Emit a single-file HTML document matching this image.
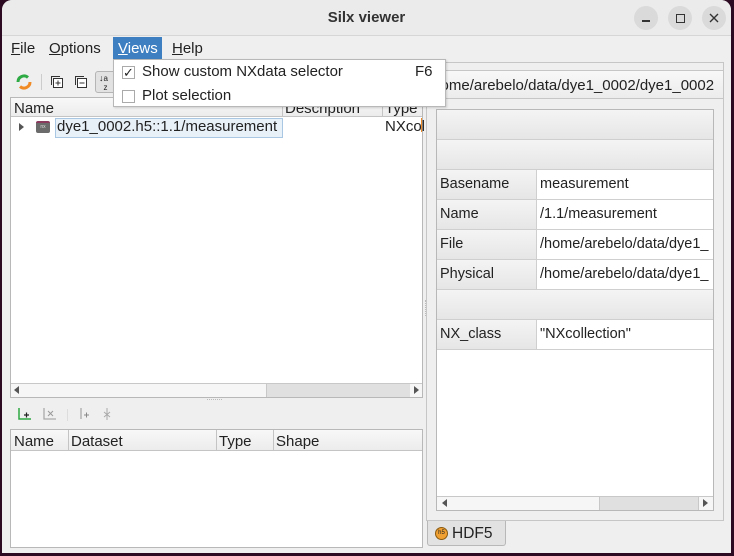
<!DOCTYPE html>
<html><head><meta charset="utf-8"><style>
*{box-sizing:border-box;margin:0;padding:0}
body{width:734px;height:556px;overflow:hidden;background:#2c0a22;font-family:"Liberation Sans",sans-serif;font-size:14px;color:#222;position:relative}
.a{position:absolute}
#win{left:2px;top:0;width:729px;height:553px;background:#efefef;border-radius:10px 10px 0 0;overflow:hidden}
.tb{left:0;top:0;width:729px;height:36px;background:#ebebeb;border-bottom:1px solid #d6d6d6}
.wb{width:24px;height:24px;border-radius:12px;background:#dadada;top:6px}
.white{background:#fff;border:1px solid #b8b8b8}
.hdr{background:linear-gradient(#f8f8f8,#ececec);border-bottom:1px solid #c4c4c4}
.cell{position:absolute;border-right:1px solid #cfcfcf;border-bottom:1px solid #cfcfcf;padding-left:3px;line-height:29px;font-size:14.5px}
.gray{background:linear-gradient(#f4f4f4,#e6e6e6)}
</style></head><body>
<div id="win" class="a">
 <div class="a tb"><div class="a" style="left:0;width:729px;top:9px;text-align:center;font-weight:bold;font-size:15px;color:#333">Silx viewer</div>
  <div class="a wb" style="left:632px"><div class="a" style="left:8px;top:14px;width:8px;height:1.5px;background:#333"></div></div>
  <div class="a wb" style="left:666px"><div class="a" style="left:8px;top:8px;width:9px;height:9px;border:1.3px solid #333"></div></div>
  <div class="a wb" style="left:700px"><svg class="a" style="left:7px;top:7px" width="10" height="10"><path d="M1 1L9 9M9 1L1 9" stroke="#333" stroke-width="1.4"/></svg></div>
 </div>
 <div class="a" style="left:9px;top:40px;font-size:15px"><u>F</u>ile</div>
 <div class="a" style="left:47px;top:40px;font-size:15px"><u>O</u>ptions</div>
 <div class="a" style="left:111px;top:37px;width:49px;height:22px;background:#3d7fc1"></div>
 <div class="a" style="left:116px;top:40px;font-size:15px;color:#fff"><u>V</u>iews</div>
 <div class="a" style="left:170px;top:40px;font-size:15px"><u>H</u>elp</div>
 <!-- toolbar -->
 <svg class="a" style="left:13px;top:73px" width="18" height="18"><path d="M3 9a6 6 0 0 1 10-4.5" stroke="#2eaa44" stroke-width="3" fill="none"/><path d="M15 9a6 6 0 0 1-10 4.5" stroke="#f08a24" stroke-width="3" fill="none"/></svg>
 <div class="a" style="left:39px;top:74px;width:1px;height:16px;background:#ccc"></div>
 <svg class="a" style="left:48px;top:75px" width="14" height="14"><rect x="3.5" y="3.5" width="9" height="9" fill="#fff" stroke="#333"/><path d="M1.5 10V1.5H10" stroke="#333" fill="none"/><path d="M8 5.5v5M5.5 8h5" stroke="#333"/></svg>
 <svg class="a" style="left:72px;top:75px" width="14" height="14"><rect x="3.5" y="3.5" width="9" height="9" fill="#fff" stroke="#333"/><path d="M1.5 10V1.5H10" stroke="#333" fill="none"/><path d="M5.5 8h5" stroke="#333"/></svg>
 <div class="a" style="left:93px;top:71px;width:22px;height:22px;border:1px solid #b5b5b5;border-radius:3px;background:#e2e2e2;font-size:9px;line-height:8px;padding:2px 0 0 3px">↓<span style="font-size:8px">a<br>&nbsp;&nbsp;z</span></div>
 <!-- tree -->
 <div class="a white" style="left:8px;top:97px;width:413px;height:301px">
  <div class="a hdr" style="left:0;top:0;width:411px;height:19px"></div>
  <div class="a" style="left:3px;top:2px;font-size:15px">Name</div>
  <div class="a" style="left:271px;top:0;width:1px;height:19px;background:#c4c4c4"></div>
  <div class="a" style="left:274px;top:2px;font-size:15px">Description</div>
  <div class="a" style="left:371px;top:0;width:1px;height:19px;background:#c4c4c4"></div>
  <div class="a" style="left:374px;top:2px;font-size:15px">Type</div>
  <svg class="a" style="left:8px;top:25px" width="6" height="8"><path d="M0 0L5 4L0 8Z" fill="#555"/></svg>
  <div class="a" style="left:25px;top:23px;width:14px;height:12px;background:#6b6b6b;border-top:2px solid #8a3b5d;border-radius:2px;font-size:5px;color:#ddd;text-align:center;line-height:9px">nx</div>
  <div class="a" style="left:44px;top:20px;width:228px;height:20px;background:#e8f0f8;border:1px solid #a9c6e3"></div>
  <div class="a" style="left:46px;top:20px;font-size:15px">dye1_0002.h5::1.1/measurement</div>
  <div class="a" style="left:374px;top:20px;font-size:15px">NXcol</div>
  <div class="a" style="left:410px;top:20px;width:1px;height:14px;background:#f08a24"></div>
  <div class="a" style="left:0;top:285px;width:411px;height:14px;background:#f6f6f6;border-top:1px solid #c8c8c8"></div>
  <div class="a" style="left:255px;top:286px;width:144px;height:13px;background:#e0e0e0;border-left:1px solid #c8c8c8"></div>
  <svg class="a" style="left:3px;top:288px" width="6" height="8"><path d="M5 0L0 4L5 8Z" fill="#555"/></svg>
  <svg class="a" style="left:403px;top:288px" width="6" height="8"><path d="M0 0L5 4L0 8Z" fill="#555"/></svg>
 </div>
 <!-- bottom toolbar -->
 <svg class="a" style="left:16px;top:408px" width="14" height="12"><path d="M1 0V11H13" stroke="#2eaa44" stroke-width="1.5" fill="none"/><path d="M6 7h5M8.5 4.5v5" stroke="#222" stroke-width="1.2"/></svg>
 <svg class="a" style="left:41px;top:408px" width="14" height="12"><path d="M1 0V11H13" stroke="#aaa" stroke-width="1.3" fill="none"/><path d="M5 3l5 5M10 3l-5 5" stroke="#999"/></svg>
 <div class="a" style="left:65px;top:409px;width:1px;height:12px;background:#ddd"></div>
 <svg class="a" style="left:78px;top:408px" width="12" height="12"><path d="M1 0V11" stroke="#aaa" stroke-width="1.3"/><path d="M4 7h5M6.5 4.5v5" stroke="#888"/></svg>
 <svg class="a" style="left:100px;top:408px" width="10" height="12"><path d="M5 0V12M2 4l6 5M8 4l-6 5" stroke="#aaa"/></svg>
 <!-- second table -->
 <div class="a white" style="left:8px;top:429px;width:413px;height:119px">
  <div class="a hdr" style="left:0;top:0;width:411px;height:21px"></div>
  <div class="a" style="left:3px;top:3px;font-size:15px">Name</div>
  <div class="a" style="left:57px;top:0;width:1px;height:21px;background:#c4c4c4"></div>
  <div class="a" style="left:60px;top:3px;font-size:15px">Dataset</div>
  <div class="a" style="left:205px;top:0;width:1px;height:21px;background:#c4c4c4"></div>
  <div class="a" style="left:208px;top:3px;font-size:15px">Type</div>
  <div class="a" style="left:262px;top:0;width:1px;height:21px;background:#c4c4c4"></div>
  <div class="a" style="left:265px;top:3px;font-size:15px">Shape</div>
 </div>
 <div class="a" style="left:205px;top:399px;width:15px;height:1px;border-top:1px dotted #bbb"></div>
 <div class="a" style="left:423px;top:300px;width:1px;height:16px;border-left:1px dotted #bbb"></div>
 <!-- right pane -->
 <div class="a" style="left:424px;top:62px;width:298px;height:459px;border:1px solid #c6c6c6"></div>
 <div class="a" style="left:434px;top:70px;width:288px;height:29px;background:linear-gradient(#f8f8f8,#ececec);border:1px solid #c6c6c6;overflow:hidden;white-space:nowrap;line-height:29px;font-size:15px"><span class="a" style="left:-9px;top:0">/home/arebelo/data/dye1_0002/dye1_0002</span></div>
 <div class="a white" style="left:434px;top:109px;width:278px;height:402px;overflow:hidden">
  <div class="cell gray" style="left:0;top:0;width:277px;height:30px"></div>
  <div class="cell gray" style="left:0;top:30px;width:277px;height:30px"></div>
  <div class="cell gray" style="left:0;top:60px;width:100px;height:30px">Basename</div><div class="cell" style="left:100px;top:60px;width:177px;height:30px">measurement</div>
  <div class="cell gray" style="left:0;top:90px;width:100px;height:30px">Name</div><div class="cell" style="left:100px;top:90px;width:177px;height:30px">/1.1/measurement</div>
  <div class="cell gray" style="left:0;top:120px;width:100px;height:30px">File</div><div class="cell" style="left:100px;top:120px;width:177px;height:30px;white-space:nowrap;overflow:hidden">/home/arebelo/data/dye1_</div>
  <div class="cell gray" style="left:0;top:150px;width:100px;height:30px">Physical</div><div class="cell" style="left:100px;top:150px;width:177px;height:30px;white-space:nowrap;overflow:hidden">/home/arebelo/data/dye1_</div>
  <div class="cell gray" style="left:0;top:180px;width:277px;height:30px"></div>
  <div class="cell gray" style="left:0;top:210px;width:100px;height:30px">NX_class</div><div class="cell" style="left:100px;top:210px;width:177px;height:30px">"NXcollection"</div>
  <div class="a" style="left:0;top:386px;width:276px;height:14px;background:#f6f6f6;border-top:1px solid #c8c8c8"></div>
  <div class="a" style="left:162px;top:387px;width:100px;height:13px;background:#e0e0e0;border-left:1px solid #c8c8c8;border-right:1px solid #c8c8c8"></div>
  <svg class="a" style="left:5px;top:389px" width="6" height="8"><path d="M5 0L0 4L5 8Z" fill="#555"/></svg>
  <svg class="a" style="left:266px;top:389px" width="6" height="8"><path d="M0 0L5 4L0 8Z" fill="#555"/></svg>
 </div>
 <div class="a" style="left:425px;top:521px;width:79px;height:25px;background:#e2e2e2;border:1px solid #b8b8b8;border-top:none;border-radius:0 0 3px 3px"></div>
 <div class="a" style="left:433px;top:527px;width:13px;height:13px;border-radius:7px;background:#f0a030;border:1px solid #8a5a10;font-size:6px;text-align:center;line-height:11px">h5</div>
 <div class="a" style="left:450px;top:525px;font-size:15.5px">HDF5</div>
 <!-- popup menu -->
 <div class="a" style="left:111px;top:59px;width:333px;height:48px;background:#fff;border:1px solid #b8b8b8;box-shadow:1px 1px 2px rgba(0,0,0,.15)">
  <div class="a" style="left:8px;top:6px;width:13px;height:13px;border:1px solid #aaa;font-size:13px;line-height:12px;text-align:center">✓</div>
  <div class="a" style="left:28px;top:3px;font-size:15px">Show custom NXdata selector</div>
  <div class="a" style="left:301px;top:3px;font-size:15px">F6</div>
  <div class="a" style="left:8px;top:30px;width:13px;height:13px;border:1px solid #aaa"></div>
  <div class="a" style="left:28px;top:27px;font-size:15px">Plot selection</div>
 </div>
</div>
</body></html>
